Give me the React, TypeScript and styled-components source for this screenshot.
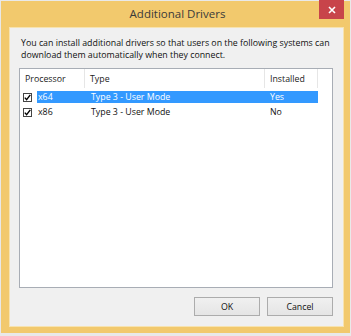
import React from "react";
import styled, { createGlobalStyle } from "styled-components";

const Global = createGlobalStyle`
  html, body { margin: 0; padding: 0; background: #ececec; }
  body { font-family: "Open Sans", "Noto Sans", sans-serif; }
`;

const Window = styled.div`
  width: 351px;
  height: 336px;
  box-sizing: border-box;
  padding: 1px 1px 3px 0px;
  background: #e9e9e9;
`;

const Frame = styled.div`
  height: 100%;
  box-sizing: border-box;
  background: #f2c96d;
  border-left: 1px solid #e8e8e8;
  display: flex;
  flex-direction: column;
  padding: 0 6px 6px 8px;
`;

const TitleBar = styled.div`
  height: 26px;
  flex: none;
  position: relative;
  display: flex;
  align-items: center;
  justify-content: center;
`;

const Title = styled.div`
  font-size: 11.5px;
  color: #3a3a3a;
  margin-left: 2px;
  margin-top: -2px;
`;

const CloseButton = styled.div`
  position: absolute;
  right: 0px;
  top: -1px;
  width: 25px;
  height: 19px;
  background: #c8444a;
  display: flex;
  align-items: center;
  justify-content: center;
`;

const Panel = styled.div`
  flex: 1;
  background: #f0f0f0;
  border: 1px solid #f7e3b0;
  display: flex;
  flex-direction: column;
  padding: 9px 10px 9px 9px;
`;

const Intro = styled.p`
  margin: 0 0 0 2px;
  font-size: 8.8px;
  line-height: 12px;
  color: #111;
`;

const ListBox = styled.div`
  margin-top: 7px;
  height: 218px;
  background: #fff;
  border: 1px solid #a8adb5;
  display: flex;
  flex-direction: column;
  font-size: 8.8px;
  color: #111;
`;

const Header = styled.div`
  display: grid;
  grid-template-columns: 65px 180px 53px 1fr;
  height: 19px;
  align-items: stretch;
`;

const HeadCell = styled.div<{ $last?: boolean }>`
  display: flex;
  align-items: center;
  padding-left: 5px;
  border-right: ${(p) => (p.$last ? "none" : "1px solid #e6e6e6")};
  color: #222;
`;

const Row = styled.div`
  display: grid;
  grid-template-columns: 17px 48px 180px 53px 1fr;
  height: 12px;
  margin-top: 3px;
  align-items: center;
`;

const CheckCell = styled.div`
  display: flex;
  align-items: center;
  padding-left: 3px;
`;

const Box = styled.div`
  width: 9px;
  height: 9px;
  border: 1px solid #444;
  background: #fff;
  box-sizing: border-box;
  display: flex;
  align-items: center;
  justify-content: center;
`;

const Cell = styled.div<{ $sel?: boolean; $pad?: number }>`
  height: 100%;
  display: flex;
  align-items: center;
  padding-left: ${(p) => p.$pad ?? 6}px;
  background: ${(p) => (p.$sel ? "#3399ff" : "transparent")};
  color: ${(p) => (p.$sel ? "#fff" : "#111")};
  white-space: nowrap;
`;

const Footer = styled.div`
  margin-top: auto;
  display: flex;
  justify-content: flex-end;
  gap: 7px;
  padding-bottom: 1px;
`;

const Button = styled.div`
  width: 66px;
  height: 19px;
  box-sizing: border-box;
  border: 1px solid #acacac;
  background: linear-gradient(#f0f0f0, #e5e5e5);
  display: flex;
  align-items: center;
  justify-content: center;
  font-size: 8.8px;
  color: #111;
`;

const Check = () => (
  <svg width="7" height="7" viewBox="0 0 7 7">
    <path d="M0.8 3.6 L2.6 5.6 L6.3 0.9" fill="none" stroke="#000" strokeWidth="1.4" />
  </svg>
);

const rows = [
  { proc: "x64", type: "Type 3 - User Mode", inst: "Yes", sel: true },
  { proc: "x86", type: "Type 3 - User Mode", inst: "No", sel: false },
];

export default function App() {
  return (
    <>
      <Global />
      <Window>
        <Frame>
          <TitleBar>
            <Title>Additional Drivers</Title>
            <CloseButton>
              <svg width="8" height="8" viewBox="0 0 8 8">
                <path d="M1 1 L7 7 M7 1 L1 7" stroke="#fff" strokeWidth="1.6" />
              </svg>
            </CloseButton>
          </TitleBar>
          <Panel>
            <Intro>
              You can install additional drivers so that users on the following systems can
              download them automatically when they connect.
            </Intro>
            <ListBox>
              <Header>
                <HeadCell>Processor</HeadCell>
                <HeadCell>Type</HeadCell>
                <HeadCell>Installed</HeadCell>
                <HeadCell $last />
              </Header>
              {rows.map((r) => (
                <Row key={r.proc}>
                  <CheckCell>
                    <Box>
                      <Check />
                    </Box>
                  </CheckCell>
                  <Cell $sel={r.sel} $pad={1}>{r.proc}</Cell>
                  <Cell $sel={r.sel}>{r.type}</Cell>
                  <Cell $sel={r.sel} $pad={5}>{r.inst}</Cell>
                  <Cell />
                </Row>
              ))}
            </ListBox>
            <Footer>
              <Button>OK</Button>
              <Button>Cancel</Button>
            </Footer>
          </Panel>
        </Frame>
      </Window>
    </>
  );
}
